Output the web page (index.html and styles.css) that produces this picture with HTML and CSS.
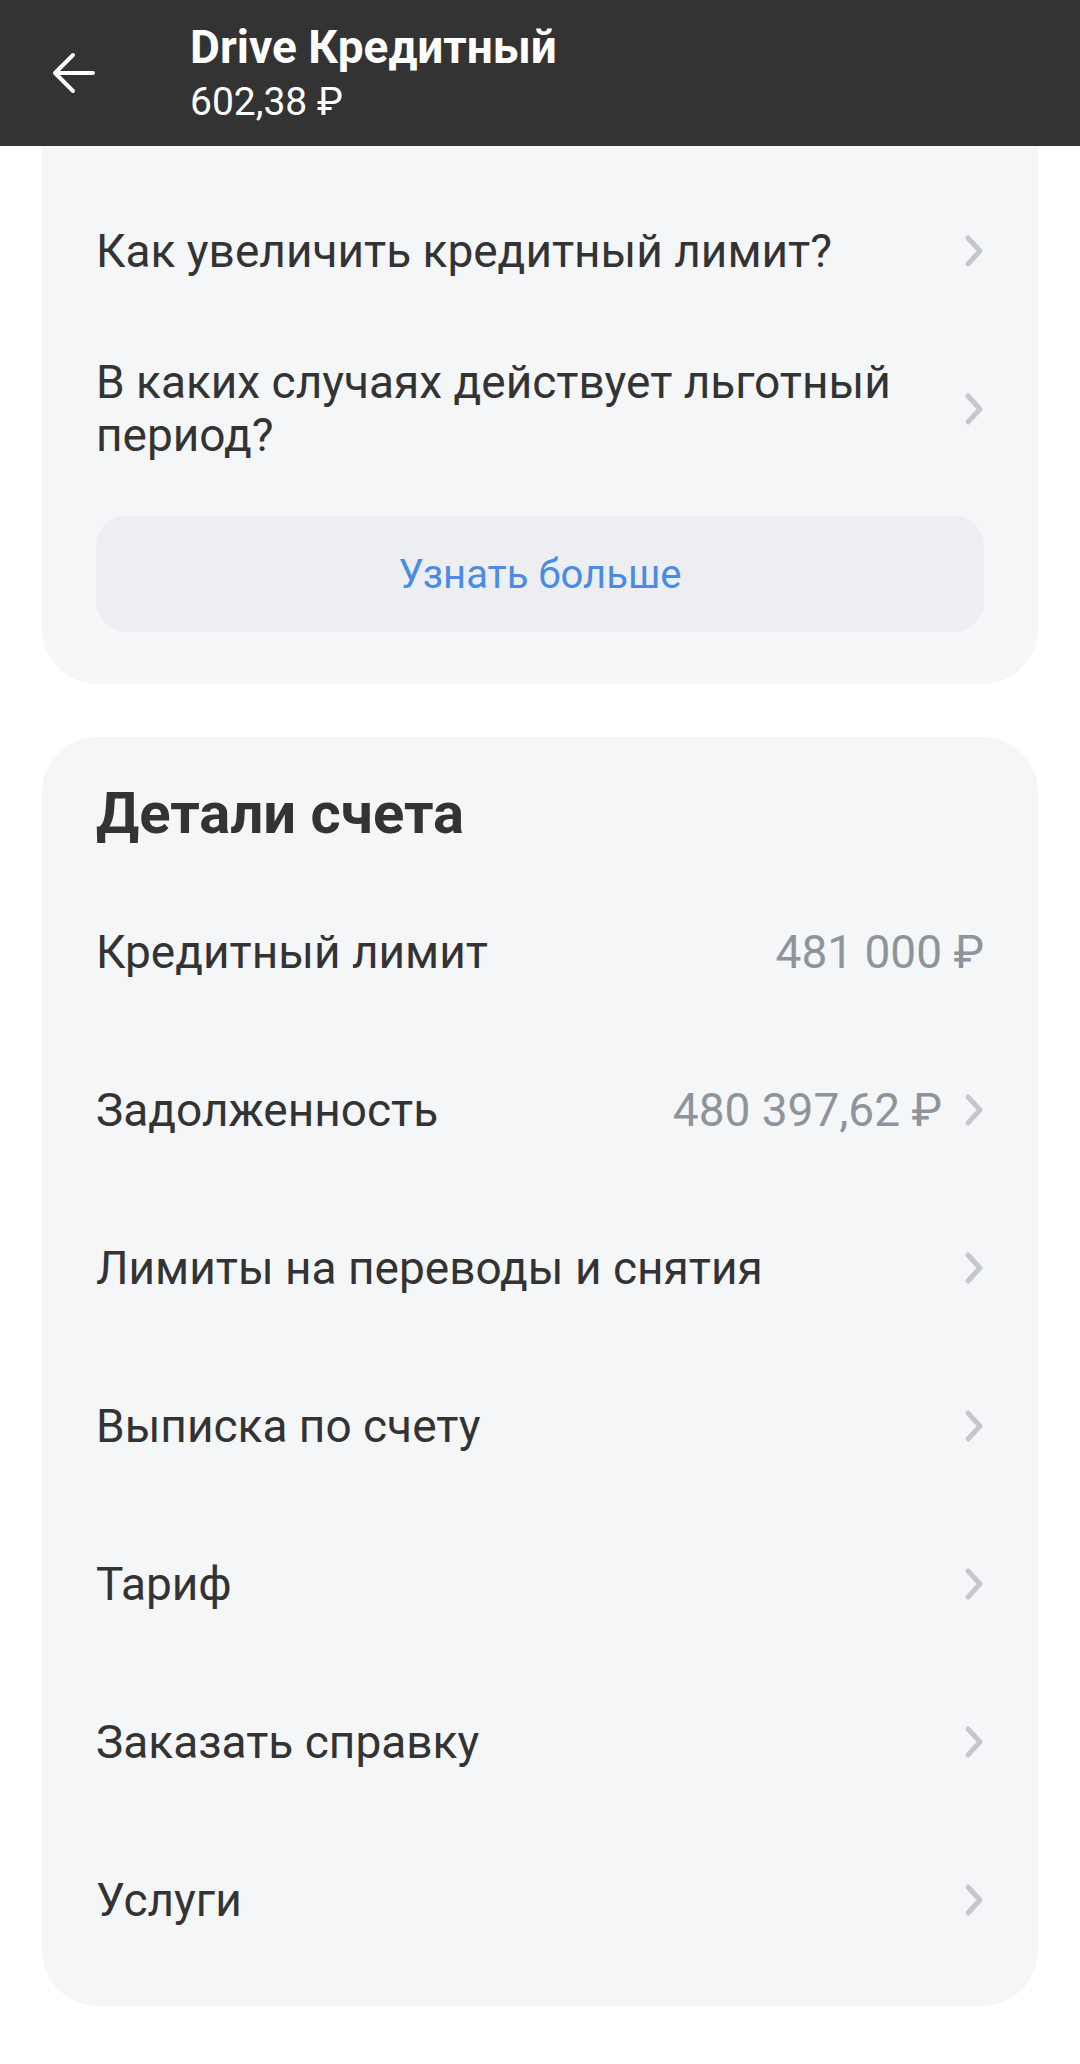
FILE: index.html
```html
<!DOCTYPE html>
<html lang="ru">
<head>
	<meta charset="UTF-8">
	<meta name="viewport" content="width=device-width, initial-scale=1.0">
	<title>Drive Кредитный</title>
	<link rel="stylesheet" href="styles.css">
</head>
<body>
	<!-- Top bar -->
	<header class="topbar">
		<div class="topbar-back">
			<svg width="48" height="48" viewBox="0 0 48 48" fill="none" stroke="#fff" stroke-width="4" stroke-linecap="round" stroke-linejoin="round">
				<path d="M44 24H6M24 6L6 24L24 42"/>
			</svg>
		</div>
		<div class="topbar-text">
			<div class="topbar-title">Drive Кредитный</div>
			<div class="topbar-sub">602,38 ₽</div>
		</div>
	</header>

	<!-- Questions card -->
	<section class="card card-faq">
		<div class="row">
			<div class="row-label">Как увеличить кредитный лимит?</div>
			<svg class="chevron" width="20" height="34" viewBox="0 0 20 34"><path d="M4 4L16 17L4 30"/></svg>
		</div>
		<div class="row">
			<div class="row-label row-label-wrap">В каких случаях действует льготный период?</div>
			<svg class="chevron" width="20" height="34" viewBox="0 0 20 34"><path d="M4 4L16 17L4 30"/></svg>
		</div>
		<button class="btn-more">Узнать больше</button>
	</section>

	<!-- Account details -->
	<section class="card card-details">
		<h2 class="card-title">Детали счета</h2>
		<div class="row">
			<div class="row-label">Кредитный лимит</div>
			<div class="row-value">481 000 ₽</div>
		</div>
		<div class="row">
			<div class="row-label">Задолженность</div>
			<div class="row-value">480 397,62 ₽</div>
			<svg class="chevron" width="20" height="34" viewBox="0 0 20 34"><path d="M4 4L16 17L4 30"/></svg>
		</div>
		<div class="row">
			<div class="row-label">Лимиты на переводы и снятия</div>
			<svg class="chevron" width="20" height="34" viewBox="0 0 20 34"><path d="M4 4L16 17L4 30"/></svg>
		</div>
		<div class="row">
			<div class="row-label">Выписка по счету</div>
			<svg class="chevron" width="20" height="34" viewBox="0 0 20 34"><path d="M4 4L16 17L4 30"/></svg>
		</div>
		<div class="row">
			<div class="row-label">Тариф</div>
			<svg class="chevron" width="20" height="34" viewBox="0 0 20 34"><path d="M4 4L16 17L4 30"/></svg>
		</div>
		<div class="row">
			<div class="row-label">Заказать справку</div>
			<svg class="chevron" width="20" height="34" viewBox="0 0 20 34"><path d="M4 4L16 17L4 30"/></svg>
		</div>
		<div class="row">
			<div class="row-label">Услуги</div>
			<svg class="chevron" width="20" height="34" viewBox="0 0 20 34"><path d="M4 4L16 17L4 30"/></svg>
		</div>
	</section>
</body>
</html>
```

FILE: styles.css
```css
body {
	margin: 0;
	padding: 0;
	background-color: #fff;
	font-family: Roboto, "Noto Sans", sans-serif;
	color: #333;
}

/* Dark top bar */
.topbar {
	display: flex;
	height: 146px;
	background-color: #333;
	color: #fff;
}

.topbar-back {
	flex: 0 0 190px;
	display: flex;
	align-items: center;
	padding-left: 49px;
	box-sizing: border-box;
}

.topbar-text {
	padding-top: 21px;
}

.topbar-title {
	font-size: 46px;
	font-weight: 700;
	line-height: 52px;
}

.topbar-sub {
	margin-top: 6px;
	font-size: 39px;
	line-height: 46px;
}

/* Cards */
.card {
	margin: 0 42px;
	background-color: #f5f6f8;
	border-radius: 56px;
}

.card-faq {
	border-radius: 0 0 56px 56px;
	padding: 26px 54px 52px;
}

.card-details {
	margin-top: 53px;
	padding: 40px 54px 27px;
}

.card-title {
	margin: 0 0 24px;
	font-size: 58px;
	font-weight: 700;
	line-height: 72px;
}

/* List rows */
.row {
	display: flex;
	align-items: center;
	height: 158px;
	font-size: 46px;
	line-height: 53px;
}

.row-label {
	flex: 1;
}

.row-label-wrap {
	padding-right: 40px;
}

.row-value {
	color: #8e949c;
}

.chevron {
	flex: 0 0 20px;
	margin-left: 22px;
	fill: none;
	stroke: #c4c7cc;
	stroke-width: 5;
	stroke-linecap: round;
	stroke-linejoin: round;
}

.btn-more {
	display: block;
	width: 100%;
	height: 116px;
	margin-top: 28px;
	border: none;
	border-radius: 30px;
	background-color: #edeef1;
	color: #4a8be3;
	font-family: Roboto, "Noto Sans", sans-serif;
	font-size: 40px;
	cursor: pointer;
}
```
